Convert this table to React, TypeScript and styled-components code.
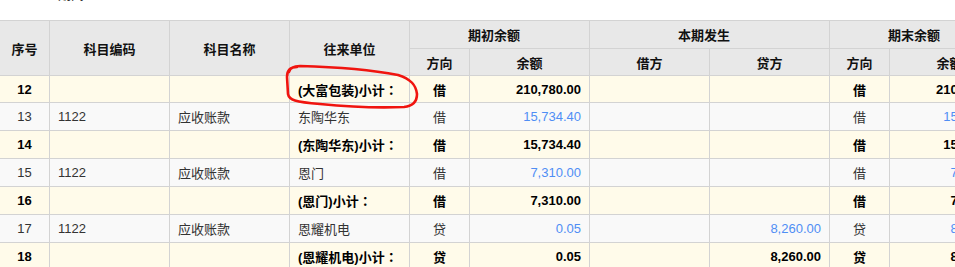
import React from "react";
import styled, { createGlobalStyle } from "styled-components";

const Global = createGlobalStyle`
  html, body { margin: 0; padding: 0; background: #fff; overflow: hidden; }
  body { font-family: "Liberation Sans", "Noto Sans CJK SC", sans-serif; font-size: 13px; }
`;

const Page = styled.div`
  position: relative;
  width: 955px;
  height: 267px;
  overflow: hidden;
`;

const TopBar = styled.div`
  height: 20px;
  overflow: hidden;
  padding-left: 58px;
`;

const Caption = styled.div`
  margin-top: -13px;
  font-size: 13px;
  line-height: 15px;
  color: #333;
`;

const Grid = styled.div`
  display: grid;
  grid-template-columns: 49px 119px 119px 119px 59px 119px 119px 119px 59px 119px 119px;
  grid-template-rows: 27px 26px 26px repeat(6, 27px);
  gap: 1px;
  padding-top: 1px;
  background: #d3d3d3;
  width: max-content;
`;

const Th = styled.div<{ $col: number; $row: number; $cs?: number; $rs?: number; $shift?: boolean }>`
  grid-column: ${(p) => p.$col} / span ${(p) => p.$cs ?? 1};
  grid-row: ${(p) => p.$row} / span ${(p) => p.$rs ?? 1};
  background: #e8e8e8;
  display: flex;
  align-items: center;
  justify-content: center;
  font-family: "Noto Sans CJK SC", sans-serif;
  font-weight: 700;
  font-size: 13px;
  color: #111;
  padding-right: ${(p) => (p.$shift ? "11px" : "0")};
`;

const Td = styled.div<{ $sub: boolean; $align?: "left" | "center" | "right"; $blue?: boolean }>`
  background: ${(p) => (p.$sub ? "#fffbea" : "#f9f9f9")};
  display: flex;
  align-items: center;
  justify-content: ${(p) =>
    p.$align === "right" ? "flex-end" : p.$align === "center" ? "center" : "flex-start"};
  padding: 0 8px;
  white-space: nowrap;
  overflow: hidden;
  font-weight: ${(p) => (p.$sub ? 700 : 400)};
  color: ${(p) => (p.$blue && !p.$sub ? "#4f8ef5" : p.$sub ? "#000" : "#333")};
  font-size: 13px;
`;

const Colon = styled.span`
  font-family: "Noto Sans CJK JP", "Noto Sans CJK SC", sans-serif;
`;

const Circle = styled.svg`
  position: absolute;
  left: 0;
  top: 0;
  pointer-events: none;
`;

type Row = {
  no: number;
  sub?: boolean;
  code?: string;
  name?: string;
  unit: string;
  dir: string;
  amt: string;
  debit?: string;
  credit?: string;
  edir: string;
  eamt: string;
};

const rows: Row[] = [
  { no: 12, sub: true, unit: "(大富包装)小计", dir: "借", amt: "210,780.00", edir: "借", eamt: "210,780.00" },
  { no: 13, code: "1122", name: "应收账款", unit: "东陶华东", dir: "借", amt: "15,734.40", edir: "借", eamt: "15,734.40" },
  { no: 14, sub: true, unit: "(东陶华东)小计", dir: "借", amt: "15,734.40", edir: "借", eamt: "15,734.40" },
  { no: 15, code: "1122", name: "应收账款", unit: "恩门", dir: "借", amt: "7,310.00", edir: "借", eamt: "7,310.00" },
  { no: 16, sub: true, unit: "(恩门)小计", dir: "借", amt: "7,310.00", edir: "借", eamt: "7,310.00" },
  { no: 17, code: "1122", name: "应收账款", unit: "恩耀机电", dir: "贷", amt: "0.05", credit: "8,260.00", edir: "贷", eamt: "8,260.05" },
  { no: 18, sub: true, unit: "(恩耀机电)小计", dir: "贷", amt: "0.05", credit: "8,260.00", edir: "贷", eamt: "8,260.05" },
];

export default function App() {
  return (
    <Page>
      <Global />
      <TopBar>
        <Caption>期间</Caption>
      </TopBar>
      <Grid>
        <Th $col={1} $row={1} $rs={2}>序号</Th>
        <Th $col={2} $row={1} $rs={2}>科目编码</Th>
        <Th $col={3} $row={1} $rs={2}>科目名称</Th>
        <Th $col={4} $row={1} $rs={2}>往来单位</Th>
        <Th $col={5} $row={1} $cs={2} $shift>期初余额</Th>
        <Th $col={7} $row={1} $cs={2} $shift>本期发生</Th>
        <Th $col={9} $row={1} $cs={2} $shift>期末余额</Th>
        <Th $col={11} $row={1} $rs={2}></Th>
        <Th $col={5} $row={2}>方向</Th>
        <Th $col={6} $row={2}>余额</Th>
        <Th $col={7} $row={2}>借方</Th>
        <Th $col={8} $row={2}>贷方</Th>
        <Th $col={9} $row={2}>方向</Th>
        <Th $col={10} $row={2}>余额</Th>
        {rows.map((r) => {
          const s = !!r.sub;
          return (
            <React.Fragment key={r.no}>
              <Td $sub={s} $align="center">{r.no}</Td>
              <Td $sub={s}>{r.code}</Td>
              <Td $sub={s}>{r.name}</Td>
              <Td $sub={s}>
                {r.unit}
                {s && <Colon>：</Colon>}
              </Td>
              <Td $sub={s} $align="center">{r.dir}</Td>
              <Td $sub={s} $align="right" $blue>{r.amt}</Td>
              <Td $sub={s} $align="right" $blue>{r.debit}</Td>
              <Td $sub={s} $align="right" $blue>{r.credit}</Td>
              <Td $sub={s} $align="center">{r.edir}</Td>
              <Td $sub={s} $align="right" $blue>{r.eamt}</Td>
              <Td $sub={s}></Td>
            </React.Fragment>
          );
        })}
      </Grid>
      <Circle width="955" height="267" viewBox="0 0 955 267">
        <path
          d="M297 67 C291 67 287 70 287 77 L288 94 C289 100 295 102 320 104 C350 107 380 108 404 107 C414 106 417 101 417 94 C416 85 411 79 398 75 C372 70 335 67 300 66 C294 66 290 68 289 72"
          fill="none"
          stroke="#f0140f"
          strokeWidth="2.6"
          strokeLinecap="round"
          strokeLinejoin="round"
        />
      </Circle>
    </Page>
  );
}
